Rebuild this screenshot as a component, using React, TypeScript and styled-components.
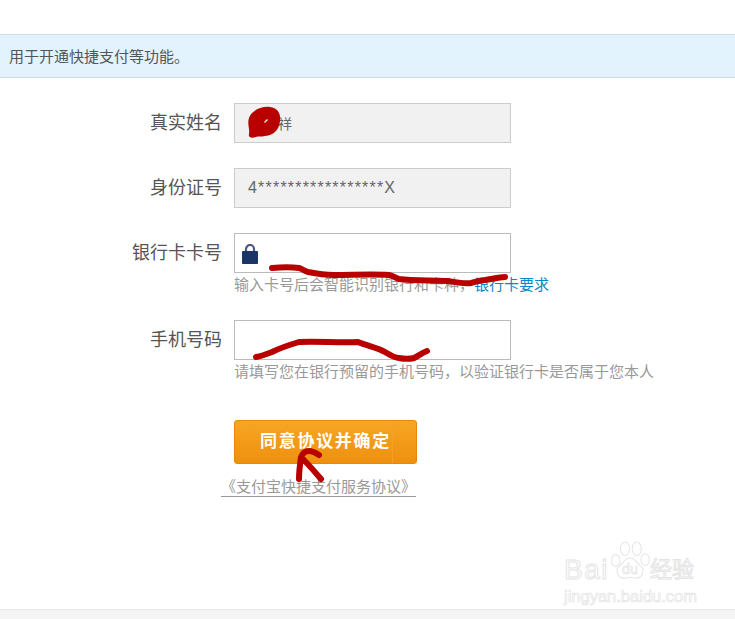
import styled, { createGlobalStyle } from 'styled-components';

const GlobalStyle = createGlobalStyle`
  html, body {
    margin: 0;
    padding: 0;
    background: #fff;
  }
`;
const Page = styled.div`
  position: relative;
  width: 735px;
  height: 619px;
  overflow: hidden;
  display: flex;
  flex-direction: column;
  box-sizing: border-box;
  padding-top: 34px;
  font-family: "Liberation Sans", "Noto Sans CJK SC", sans-serif;
`;
const Notice = styled.div`
  height: 44px;
  box-sizing: border-box;
  padding-left: 9px;
  line-height: 43px;
  font-size: 15px;
  color: #555;
  background: #e2f3fe;
  border-top: 1px solid #cfdde8;
  border-bottom: 1px solid #cfd8e0;
`;
const Form = styled.div`
  display: flex;
  flex-direction: column;
  padding-top: 25px;
`;
const Row = styled.div<{ $gap: number }>`
  display: flex;
  margin-bottom: ${props => props.$gap}px;
`;
const Label = styled.label`
  width: 222px;
  height: 40px;
  margin-right: 12px;
  text-align: right;
  font-size: 18px;
  line-height: 41px;
  color: #555;
`;
const Field = styled.div`
  display: flex;
  flex-direction: column;
  align-items: flex-start;
`;
const Input = styled.div<{ $readonly?: boolean; $small?: boolean }>`
  width: 277px;
  height: 40px;
  box-sizing: border-box;
  display: flex;
  align-items: center;
  padding-left: ${props => (props.$readonly ? 13 : 7)}px;
  font-size: ${props => (props.$small ? 14 : 16)}px;
  letter-spacing: ${props => (props.$small ? 1 : 1.2)}px;
  color: #666;
  border: 1px solid ${props => (props.$readonly ? '#ccc' : '#bbb')};
  background: ${props => (props.$readonly ? '#f1f1f1' : '#fff')};
`;
const Hint = styled.div`
  height: 21px;
  margin: 1px 0 1px;
  font-size: 15px;
  line-height: 21px;
  white-space: nowrap;
  color: #999;
`;
const HintLink = styled.a`
  color: #0a85c9;
`;
const Actions = styled.div`
  display: flex;
  flex-direction: column;
  align-items: flex-start;
  padding-left: 234px;
`;
const Submit = styled.button`
  position: relative;
  width: 183px;
  height: 44px;
  padding: 0 0 5px;
  font-family: "Noto Sans CJK SC", sans-serif;
  font-size: 17px;
  font-weight: 700;
  letter-spacing: 1.7px;
  color: #fff;
  background: linear-gradient(#f6a623, #ef900f);
  border: 1px solid #ea860a;
  border-radius: 3px;
  &::after {
    content: '';
    position: absolute;
    top: 0;
    bottom: 0;
    right: 23px;
    width: 1px;
    background: #f2a02a;
  }
`;
const Agreement = styled.a`
  margin: 14px 0 0 -13px;
  width: 195px;
  font-size: 15px;
  line-height: 18px;
  white-space: nowrap;
  color: #999;
  border-bottom: 1px solid #999;
`;
const Footer = styled.div`
  margin-top: auto;
  height: 9px;
  background: #f5f5f5;
  border-top: 1px solid #e8e8e8;
`;
const Scribbles = styled.svg`
  position: absolute;
  top: 0;
  left: 0;
  pointer-events: none;
`;
const Watermark = styled.div`
  position: absolute;
  left: 564px;
  top: 541px;
  width: 140px;
  color: #fff;
  -webkit-text-stroke: 1px #e4e4e4;
`;
const Brand = styled.div`
  display: flex;
  align-items: flex-start;
  height: 40px;
`;
const BrandWord = styled.span`
  font-size: 28px;
  line-height: 30px;
  margin-top: 14px;
  letter-spacing: 1.5px;
`;
const Paw = styled.svg`
  flex: none;
`;
const BrandCn = styled.span`
  font-size: 22px;
  line-height: 24px;
  margin: 17px 0 0 -1px;
  white-space: nowrap;
`;
const Domain = styled.div`
  margin-top: 6px;
  font-size: 16.5px;
  line-height: 18px;
  white-space: nowrap;
  -webkit-text-stroke-width: 0.7px;
`;
const LockSvg = styled.svg`
  margin-top: 1px;
`;

function LockIcon() {
  return (
    <LockSvg width="16" height="20" viewBox="0 0 16 20">
      <path d="M4 9V5a4 4 0 0 1 8 0V9" fill="none" stroke="#4a5680" strokeWidth="2.2" />
      <rect x="0" y="7" width="16" height="13" rx="1" fill="#1b3566" />
    </LockSvg>
  );
}

function App() {
  return (
    <Page>
      <GlobalStyle />
      <Notice>用于开通快捷支付等功能。</Notice>
      <Form>
        <Row $gap={25}>
          <Label>真实姓名</Label>
          <Field>
            <Input $readonly $small>&emsp;&emsp;祥</Input>
          </Field>
        </Row>
        <Row $gap={25}>
          <Label>身份证号</Label>
          <Field>
            <Input $readonly>4*****************X</Input>
          </Field>
        </Row>
        <Row $gap={24}>
          <Label>银行卡卡号</Label>
          <Field>
            <Input><LockIcon /></Input>
            <Hint>输入卡号后会智能识别银行和卡种，<HintLink>银行卡要求</HintLink></Hint>
          </Field>
        </Row>
        <Row $gap={37}>
          <Label>手机号码</Label>
          <Field>
            <Input />
            <Hint>请填写您在银行预留的手机号码，以验证银行卡是否属于您本人</Hint>
          </Field>
        </Row>
        <Actions>
          <Submit>同意协议并确定</Submit>
          <Agreement>《支付宝快捷支付服务协议》</Agreement>
        </Actions>
      </Form>
      <Footer />
      <Watermark>
        <Brand>
          <BrandWord>Bai</BrandWord>
          <Paw width="42" height="39" viewBox="0 0 50 46">
            <g fill="#fff" stroke="#e4e4e4" strokeWidth="1.2">
              <ellipse cx="8" cy="23" rx="5" ry="7" />
              <ellipse cx="19" cy="9" rx="5.500" ry="8" />
              <ellipse cx="33" cy="9" rx="5.500" ry="8" />
              <ellipse cx="43" cy="22" rx="5" ry="7" />
              <path d="M25 20c6 0 8 6 13 10 5 4 2 14-6 14-3 0-5-1-7-1s-4 1-7 1c-8 0-11-10-6-14 5-4 7-10 13-10z" />
            </g>
            <text x="25" y="39" textAnchor="middle" fontSize="17" fontFamily="Liberation Sans, sans-serif" fill="#fff" stroke="#e4e4e4" strokeWidth="0.8">du</text>
          </Paw>
          <BrandCn>经验</BrandCn>
        </Brand>
        <Domain>jingyan.baidu.com</Domain>
      </Watermark>
      <Scribbles width="735" height="619" viewBox="0 0 735 619">
        <g fill="none" stroke="#b80000" strokeLinecap="round" strokeLinejoin="round">
          <path strokeWidth="6" d="M272 268C282 267 292 267 299 268 303 269 304 271 308 272 318 274 326 275 334 275 352 275 372 274 389 275 394 276 395 278 399 279 414 281 432 280 447 281 455 282 463 284 471 283 476 282 480 280 485 280 492 279 499 277 505 277" />
          <path strokeWidth="6" d="M256 357C262 356 267 354 272 352 280 348 289 345 299 342 317 341 340 343 358 342 368 346 378 348 385 352 390 355 394 358 399 358 404 359 410 359 414 358 418 356 422 353 427 351" />
          <path strokeWidth="6" d="M299 479C299 471 300 464 301 457 308 464 315 472 321 479M301 457C303 452 306 451 309 451 313 451 316 453 319 455" />
        </g>
        <path fill="#b80000" d="M249 118c2-7 12-12 21-11 8 1 11 7 10 14-1 9-6 14-15 15-4 1-7 0-9 1-5 2-8 0-7-3 1-5-2-10 0-16z" />
        <path fill="#e6e6e6" d="M264 122l3-3 1 1-3 3z" />
      </Scribbles>
    </Page>
  );
}

export default App;
